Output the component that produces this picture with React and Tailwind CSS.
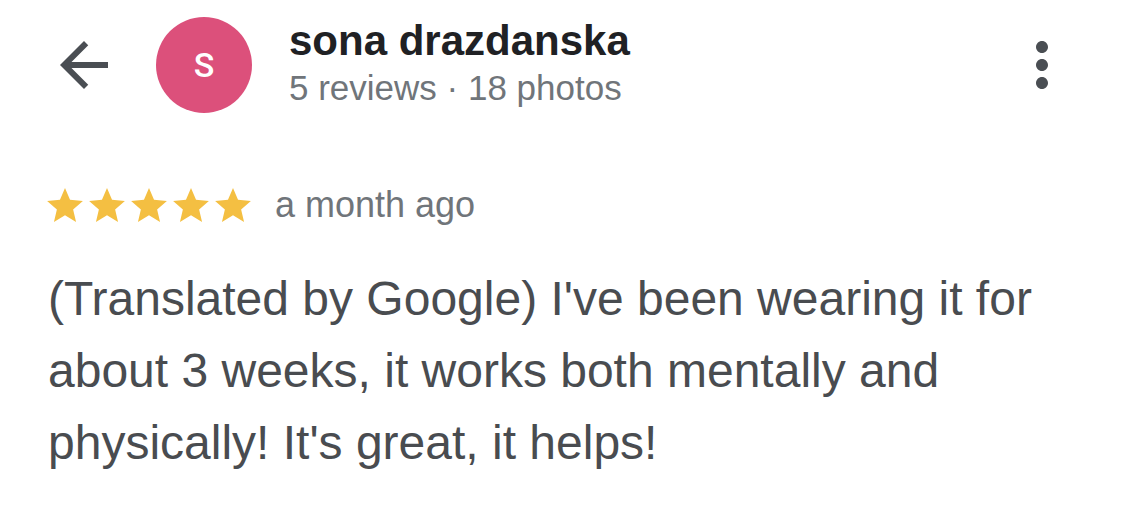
import React from "react";

const Star = () => (
  <svg viewBox="2 2 20 19" className="w-[36px] h-[34px]">
    <path
      fill="#f4bf42"
      d="M12 17.27L18.18 21l-1.64-7.03L22 9.24l-7.19-.61L12 2 9.19 8.63 2 9.24l5.46 4.73L5.82 21z"
    />
  </svg>
);

const App = () => {
  return (
    <div className="w-[1125px] h-[528px] bg-white font-['Liberation_Sans',Arial,sans-serif] overflow-hidden">
      {/* Header */}
      <div className="flex items-center pt-[17px] pl-[48px] pr-[47px] h-[113px]">
        <svg viewBox="0 0 24 24" className="w-[72px] h-[72px] shrink-0">
          <path
            fill="#4a4e53"
            d="M20 11H7.83l5.59-5.59L12 4l-8 8 8 8 1.41-1.41L7.83 13H20v-2z"
          />
        </svg>
        <div className="ml-[36px] w-[96px] h-[96px] rounded-full bg-[#dc507b] flex items-center justify-center shrink-0">
          <span className="text-white text-[34px] font-medium font-['Roboto',sans-serif] leading-none">
            S
          </span>
        </div>
        <div className="ml-[37px] mb-[5px] flex flex-col">
          <span className="text-[42px] font-bold leading-[42px] text-[#202124]">
            sona drazdanska
          </span>
          <span className="mt-[8px] text-[35px] leading-[36px] text-[#70757a]">
            5 reviews · 18 photos
          </span>
        </div>
        <svg viewBox="0 0 24 24" className="ml-auto w-[72px] h-[72px] shrink-0">
          <path
            fill="#4a4e53"
            d="M12 8c1.1 0 2-.9 2-2s-.9-2-2-2-2 .9-2 2 .9 2 2 2zm0 2c-1.1 0-2 .9-2 2s.9 2 2 2 2-.9 2-2-.9-2-2-2zm0 6c-1.1 0-2 .9-2 2s.9 2 2 2 2-.9 2-2-.9-2-2-2z"
          />
        </svg>
      </div>

      {/* Rating row */}
      <div className="flex items-center mt-[74px] pl-[47px]">
        <div className="flex gap-[6px]">
          <Star />
          <Star />
          <Star />
          <Star />
          <Star />
        </div>
        <span className="ml-[24px] text-[36px] leading-[36px] text-[#70757a]">
          a month ago
        </span>
      </div>

      {/* Review text */}
      <p className="mt-[40px] px-[48px] text-[48px] leading-[72px] text-[#494c50]">
        (Translated by Google) I've been wearing it for about 3 weeks, it works
        both mentally and physically! It's great, it helps!
      </p>
    </div>
  );
};

export default App;
